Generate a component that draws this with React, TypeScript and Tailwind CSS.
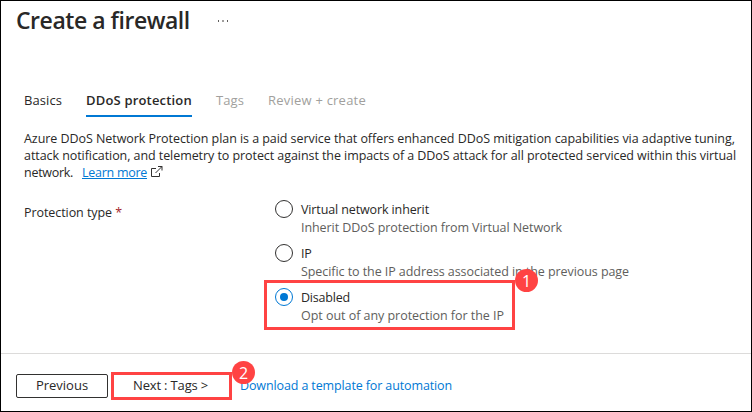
type Choice = { title: string; note: string; titleTrack: string; noteTrack: string; selected?: boolean };

const choices: Choice[] = [
  { title: "Virtual network inherit", note: "Inherit DDoS protection from Virtual Network", titleTrack: "tracking-[-0.117px]", noteTrack: "tracking-[-0.067px]" },
  { title: "IP", note: "Specific to the IP address associated in the previous page", titleTrack: "tracking-[-0.2px]", noteTrack: "tracking-[-0.067px]" },
  { title: "Disabled", note: "Opt out of any protection for the IP", titleTrack: "tracking-[-0.2px]", noteTrack: "tracking-[-0.037px]", selected: true },
];

function Radio({ selected }: { selected?: boolean }) {
  return (
    <span className={`flex size-[18px] shrink-0 items-center justify-center rounded-full border ${selected ? "border-[#0078d4]" : "border-[#323130]"}`}>
      {selected && <span className="size-2 rounded-full bg-[#0078d4]" />}
    </span>
  );
}

function Badge({ n, place }: { n: number; place: string }) {
  return (
    <span className={`absolute z-10 flex size-[23px] items-center justify-center rounded-full bg-[#ff4343] text-[16px] leading-none text-white ${place}`}>
      {n}
    </span>
  );
}

export default function App() {
  return (
    <div className="flex h-[412px] w-[752px] flex-col overflow-hidden border border-black bg-white font-['Open_Sans','Noto_Sans',sans-serif] text-[12.5px] leading-[17px] text-[#292827]">
      <header className="flex h-[38px] pl-[15px] pt-[3px]">
        <h1 className="w-[201px] whitespace-nowrap text-[23px] font-semibold leading-[32px] tracking-[-0.46px]">Create a firewall</h1>
        <svg className="mt-[15px]" width="12" height="4" viewBox="0 0 12 4" fill="#605e5c">
          <rect x="1" y="1" width="1" height="2" />
          <rect x="5" y="1" width="2" height="2" fillOpacity=".6" />
          <rect x="10" y="1" width="1" height="2" />
        </svg>
      </header>

      <nav className="mt-[53px] flex h-[25px] pl-[23px] text-[13px] leading-[17px]">
        <span className="w-[62px] tracking-[0.08px]">Basics</span>
        <span className="w-[106px] whitespace-nowrap border-b-2 border-[#0078d4] font-semibold tracking-[0.18px]">DDoS protection</span>
        <span className="ml-6 w-[52px] tracking-[0.09px] text-[#a19f9d]">Tags</span>
        <span className="tracking-[0.22px] text-[#a19f9d]">Review + create</span>
      </nav>

      <main className="h-[236px] pl-[23px] pt-[13px]">
        <p className="whitespace-nowrap">
          <span className="block tracking-[-0.055px]">Azure DDoS Network Protection plan is a paid service that offers enhanced DDoS mitigation capabilities via adaptive tuning,</span>
          <span className="block tracking-[-0.068px]">attack notification, and telemetry to protect against the impacts of a DDoS attack for all protected serviced within this virtual</span>
          <span className="flex">
            <span className="w-[58px] tracking-[-0.28px]">network.</span>
            <a className="w-[65px] tracking-[-0.27px] text-[#0078d4] underline decoration-1 underline-offset-1">Learn more</a>
            <svg className="ml-1 mt-[2px]" width="12" height="12" viewBox="0 0 12 12" fill="none" stroke="#323130">
              <path d="M5 2.500H.5v8h8V7M7 .5h4V4.500M11 .5L4.500 7" />
            </svg>
          </span>
        </p>

        <div className="mt-[19px] flex">
          <div className="w-[251px] pt-[4px] tracking-[-0.07px]">
            Protection type <span className="text-[#a4262c]">*</span>
          </div>
          <div className="flex flex-col gap-[9px]">
            {choices.map((c) => (
              <div key={c.title} className="relative flex h-[35px] gap-[8px]">
                <Radio selected={c.selected} />
                <div className="whitespace-nowrap pt-px">
                  <div className={`h-[18px] ${c.titleTrack}`}>{c.title}</div>
                  <div className={`text-[#605e5c] ${c.noteTrack}`}>{c.note}</div>
                </div>
                {c.selected && (
                  <>
                    <span className="absolute -left-[11px] -top-[8px] h-[50px] w-[251px] border-3 border-[#ff4343]" />
                    <Badge n={1} place="left-[240px] -top-[19px]" />
                  </>
                )}
              </div>
            ))}
          </div>
        </div>
      </main>

      <footer className="flex flex-1 border-t border-[#dcdbda] pl-[15px] pt-[18px] text-[13px]">
        <button className="mt-[2px] h-[24px] w-[92px] rounded-[2px] border border-[#323130] pb-[2px]">Previous</button>
        <div className="relative ml-[3px] flex h-[28px] w-[121px] items-center border-3 border-[#ff4343] pb-[2px] pl-[19px]">
          <span className="whitespace-nowrap tracking-[-0.16px]">Next : Tags &gt;</span>
          <Badge n={2} place="left-[118px] -top-[14px]" />
        </div>
        <a className="ml-[8px] mt-[5px] whitespace-nowrap text-[12.5px] tracking-[-0.12px] text-[#0078d4]">Download a template for automation</a>
      </footer>
    </div>
  );
}
